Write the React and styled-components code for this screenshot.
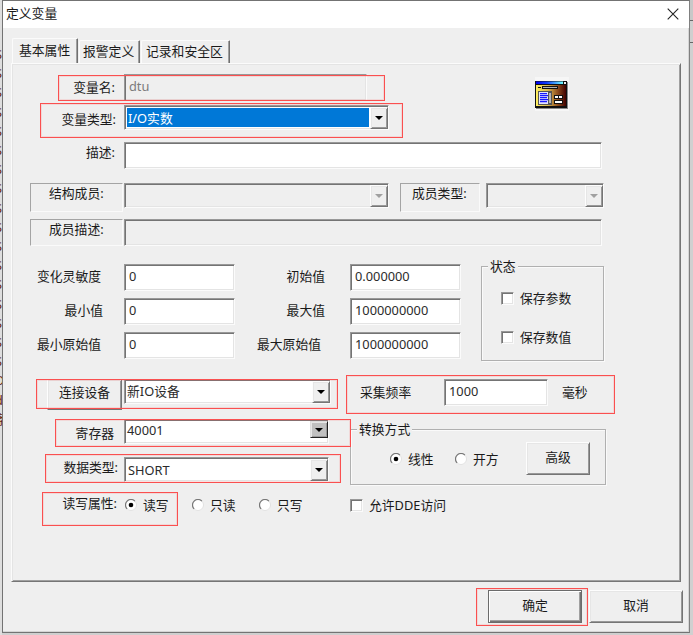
import { Fragment } from 'react';
import styled, { createGlobalStyle, css } from 'styled-components';

const GlobalStyle = createGlobalStyle`
  * { box-sizing: border-box; }
  body {
    margin: 0;
    background: #cfcfcf;
    color: #1a1a1a;
    font: 12.8px/16px 'Noto Sans', 'Noto Sans CJK SC', sans-serif;
    white-space: nowrap;
  }
`;

const sunken = css`
  border: 1px solid;
  border-color: #989898 #fbfbfb #fbfbfb #989898;
  box-shadow: inset 1px 1px 0 #747474, inset -1px -1px 0 #e4e4e4;
`;

const raised = css`
  border: 1px solid;
  border-color: #fdfdfd #757575 #757575 #fdfdfd;
  box-shadow: inset 1px 1px 0 #e6e6e6, inset -1px -1px 0 #999;
`;

const Desktop = styled.div`
  position: relative;
  display: flex;
  width: 693px;
  height: 635px;
  overflow: hidden;
`;

const Behind = styled.div`
  width: 2px;
  height: 635px;
  padding-top: 45px;
  flex: none;
  overflow: hidden;
  background: #dedede;
  color: #6a2a14;
  line-height: 19.2px;
  span {
    display: block;
    width: 8px;
    margin-left: -5px;
  }
`;

const BehindRight = styled.div`
  flex: 1;
  border-top: 20px solid #c8c8c8;
  background: linear-gradient(#666 1px, #cfcfcf 1px, #cfcfcf 22px, #666 22px, #666 23px, #d0d0d0 23px);
`;

const Dialog = styled.div`
  display: flex;
  flex-direction: column;
  width: 688px;
  height: 633px;
  flex: none;
  border: 1px solid #737373;
  border-right-color: #808080;
  background: #efefef;
  box-shadow: inset -1px -1px 0 #d5d5d5;
`;

const TitleBar = styled.div`
  display: flex;
  justify-content: space-between;
  height: 27px;
  flex: none;
  padding: 4px 10px 0 3px;
  background: #fff;
  svg { margin-top: 3px; }
`;

const Tabs = styled.div`
  display: flex;
  align-items: flex-end;
  height: 35px;
  flex: none;
  padding-left: 9px;
`;

const Tab = styled.div`
  width: ${p => p.$w}px;
  height: ${p => (p.$active ? 26 : 23)}px;
  margin-bottom: ${p => (p.$active ? -1 : 0)}px;
  padding: ${p => (p.$active ? '3px 0 0 6px' : '2px 0 0 3px')};
  border: solid;
  border-width: 1px 1px 0;
  border-color: #fbfbfb #707070 #fbfbfb #fbfbfb;
  border-radius: 2px 1px 0 0;
  background: #efefef;
  box-shadow: inset -1px 0 0 #a0a0a0;
  & + & { margin-left: 1px; }
  &:last-child { padding-left: 4px; }
`;

const Page = styled.div`
  width: 670px;
  height: 519px;
  flex: none;
  margin-left: 8px;
  padding-top: 10px;
  border: 1px solid;
  border-color: #fbfbfb #757575 #757575 #fbfbfb;
  box-shadow: inset 1px 1px 0 #e4e4e4, inset -1px -1px 0 #a0a0a0;
`;

const Row = styled.div`
  display: flex;
  align-items: flex-start;
  height: ${p => p.$h}px;
`;

const Label = styled.div`
  width: ${p => p.$w || 112}px;
  flex: none;
  padding: ${p => p.$top ?? 4}px ${p => p.$end || 0}px 0 0;
  text-align: right;
`;

const Field = styled.div`
  ${sunken}
  width: ${p => p.$w}px;
  height: 27px;
  flex: none;
  padding: 3px 0 0 4px;
  background: ${p => (p.$off ? '#efefef' : '#fff')};
  color: ${p => (p.$off ? '#7c7c7c' : '#2b2b2b')};
`;

const FrameLabel = styled.div`
  width: ${p => p.$w}px;
  height: ${p => p.$h}px;
  flex: none;
  margin: 0 ${p => p.$after}px 0 ${p => p.$before}px;
  padding: 1px 0 0 ${p => p.$pad}px;
  border: 1px solid;
  border-color: #a4a4a4 #fafafa #fafafa #a4a4a4;
`;

const ComboBox = styled.div`
  ${sunken}
  display: flex;
  width: ${p => p.$w}px;
  height: 25px;
  flex: none;
  padding: 1px 0 1px 1px;
  background: ${p => (p.$off ? '#efefef' : '#fff')};
`;

const ComboText = styled.div`
  flex: 1;
  margin: 1px;
  padding: ${p => p.$top ?? 2}px 0 0 1px;
  background: ${p => (p.$selected ? '#0078d7' : 'transparent')};
  color: ${p => (p.$selected ? '#fff' : '#2b2b2b')};
  text-indent: ${p => p.$shift || 0}px;
`;

const ComboButton = styled.div`
  ${raised}
  display: flex;
  align-items: center;
  justify-content: center;
  width: 18px;
  height: ${p => (p.$dark ? 17 : 22)}px;
  background: ${p => (p.$dark ? '#c0c0c0' : '#efefef')};
  ${p => p.$dark && 'border-color: #ddd #222 #222 #ddd;'}
`;

const Group = styled.div`
  position: relative;
  width: ${p => p.$w}px;
  height: ${p => p.$h}px;
  margin-top: ${p => p.$top || 0}px;
  border: 1px solid #b0b0b0;
  box-shadow: inset 1px 1px 0 #fafafa, 1px 1px 0 #fafafa;
`;

const Legend = styled.div`
  position: absolute;
  top: -9px;
  left: 6px;
  padding: 0 2px;
  background: #efefef;
`;

const Option = styled.div`
  display: flex;
  align-items: center;
  height: 16px;
  width: ${p => (p.$w ? `${p.$w}px` : 'auto')};
  gap: 6px;
`;

const ConvertOption = styled(Option)`
  margin-top: 9px;
`;

const CheckBox = styled.span`
  ${sunken}
  width: 13px;
  height: 13px;
  background: #fff;
`;

const Button = styled.div`
  ${raised}
  width: ${p => p.$w}px;
  height: ${p => p.$h}px;
  flex: none;
  padding-top: ${p => p.$top}px;
  text-align: center;
  ${p => p.$primary && css`
    border-color: #6b6b6b;
    box-shadow: inset 1px 1px 0 #fff, inset -1px -1px 0 #747474, inset -2px -2px 0 #a0a0a0;
  `}
`;

const Section = styled.div`
  display: flex;
  align-items: flex-start;
  height: ${p => p.$h}px;
`;

const Numbers = styled.div`
  display: grid;
  grid-template-columns: 112px 111px 115px 111px;
  row-gap: 7px;
  width: 469px;
`;

const StateOptions = styled.div`
  display: flex;
  flex-direction: column;
  gap: 23px;
  padding: 23px 0 0 19px;
`;

const Devices = styled.div`
  width: 338px;
`;

const DeviceButton = styled.div`
  width: 112px;
  padding-left: 35px;
`;

const RateLabel = styled.div`
  width: 94px;
  padding: 5px 0 0 10px;
`;

const UnitLabel = styled.div`
  padding: 5px 0 0 14px;
`;

const Convert = styled.div`
  display: flex;
  padding: 12px 0 0 39px;
`;

const AccessOptions = styled.div`
  display: flex;
  padding: 2px 0 0 1px;
`;

const Footer = styled.div`
  display: flex;
  justify-content: flex-end;
  gap: 7px;
  padding: 8px 6px 0 0;
`;

const IconCell = styled.div`
  margin: 3px 0 0 168px;
`;

// red annotation frame laid over the form
const Mark = styled.div`
  position: absolute;
  left: ${p => p.$x}px;
  top: ${p => p.$y}px;
  width: ${p => p.$w}px;
  height: ${p => p.$h}px;
  border: 1px solid #fa5050;
  box-shadow: inset 0 0 0 1px rgba(255, 90, 90, 0.15);
`;

const marks = [
  [58, 75, 327, 26],
  [40, 103, 363, 35],
  [36, 379, 302, 30],
  [346, 375, 269, 39],
  [55, 419, 296, 28],
  [45, 454, 296, 29],
  [42, 492, 136, 34],
  [476, 588, 112, 38],
];

const numbers = [
  ['变化灵敏度', 23, '0', '初始值', 25, '0.000000'],
  ['最小值', 21, '0', '最大值', 25, '1000000000'],
  ['最小原始值', 23, '0', '最大原始值', 29, '1000000000'],
];

const Arrow = ({ color = '#000' }) => (
  <svg width="8" height="4" viewBox="0 0 8 4">
    <path d="M0 0h8L4 4z" fill={color} />
  </svg>
);

const Combo = ({ w, off, dark, selected, top, shift, children }) => (
  <ComboBox $w={w} $off={off}>
    <ComboText $selected={selected} $top={top} $shift={shift}>{children}</ComboText>
    <ComboButton $dark={dark}><Arrow color={off ? '#a0a0a0' : '#000'} /></ComboButton>
  </ComboBox>
);

const Radio = ({ on }) => (
  <svg width="12" height="12" viewBox="0 0 12 12">
    <circle cx="6" cy="6" r="5.5" fill="#fff" stroke="#e2e2e2" />
    <path d="M2.1 9.9A5.5 5.5 0 0 1 9.9 2.1" fill="none" stroke="#777" strokeWidth="1.2" />
    {on && <circle cx="6" cy="6" r="2.3" fill="#000" />}
  </svg>
);

const FormIcon = () => (
  <svg width="34" height="34" viewBox="0 0 34 34">
    <defs>
      <linearGradient id="bar">
        <stop offset="0" stopColor="#0000f0" />
        <stop offset="0.4" stopColor="#1040ff" />
        <stop offset="1" stopColor="#70ffff" />
      </linearGradient>
      <linearGradient id="gold">
        <stop offset="0" stopColor="#fff060" />
        <stop offset="0.4" stopColor="#d8b850" />
        <stop offset="0.7" stopColor="#945420" />
        <stop offset="1" stopColor="#400000" />
      </linearGradient>
    </defs>
    <path d="M0 0h34v34H0z" fill="#f6f6f6" />
    <path d="M1 5h32v27H1z" fill="#8a8a8a" />
    <path d="M0 4h32v27H0z" fill="#111" />
    <path d="M1 4.5h27v2.5H1z" fill="url(#bar)" />
    <path d="M29 5h2v2h-2z" fill="#eee" />
    <path d="M1 8h30v21H1z" fill="url(#gold)" />
    <path d="M3 10h3v1H3zM7 9h16v3H7z" fill="#111" />
    <path d="M8 10h14v1H8z" fill="#b4b4b4" />
    <path d="M3 14h14v14H3z" fill="#555" />
    <path d="M4 15h9v12H4z" fill="#e4e4ff" />
    <path d="M14 16h2v10h-2z" fill="#b4b4b4" />
    <path d="M5 16h7v1.3H5zM5 18h8v1.3H5zM5 20h7v1.3H5zM5 22h8v1.3H5zM5 24h7v1.3H5z" fill="#1818ff" />
    <path d="M19 18h9v4h-9zM19 23h9v4h-9z" fill="#111" />
    <path d="M20 19h3v2h-3zM24 19h3v2h-3zM20 24h7v2h-7z" fill="#fff" />
  </svg>
);

export default () => (
  <Desktop>
    <GlobalStyle />
    <Behind>
      {'SSSSSSSSSSSSSSSSSDd条'.split('').map((c, i) => <span key={i}>{c}</span>)}
    </Behind>
    <Dialog>
      <TitleBar>
        <span>定义变量</span>
        <svg width="12" height="12" viewBox="0 0 12 12">
          <path d="M.7.7l10.6 10.6M11.3.7L.7 11.3" stroke="#222" strokeWidth="1.1" />
        </svg>
      </TitleBar>
      <Tabs>
        <Tab $w={66} $active>基本属性</Tab>
        <Tab $w={61}>报警定义</Tab>
        <Tab $w={89}>记录和安全区</Tab>
      </Tabs>
      <Page>
        <Row $h={31}>
          <Label $end={9} $top={5}>变量名:</Label>
          <Field $w={243} $off>dtu</Field>
          <IconCell><FormIcon /></IconCell>
        </Row>
        <Row $h={37}>
          <Label $end={8} $top={6}>变量类型:</Label>
          <Combo w={265} selected>I/O实数</Combo>
        </Row>
        <Row $h={41}>
          <Label $end={9} $top={2}>描述:</Label>
          <Field $w={478} />
        </Row>
        <Row $h={36}>
          <FrameLabel $w={93} $h={29} $before={18} $after={1} $pad={18}>结构成员:</FrameLabel>
          <Combo w={265} off />
          <FrameLabel $w={80} $h={29} $before={11} $after={6} $pad={11}>成员类型:</FrameLabel>
          <Combo w={118} off />
        </Row>
        <Row $h={45}>
          <FrameLabel $w={93} $h={27} $before={18} $after={1} $pad={18}>成员描述:</FrameLabel>
          <Field $w={478} $off />
        </Row>
        <Section $h={115}>
          <Numbers>
            {numbers.map(([a, aEnd, av, b, bEnd, bv]) => (
              <Fragment key={a}>
                <Label $end={aEnd}>{a}</Label>
                <Field $w={111}>{av}</Field>
                <Label $end={bEnd} $w={115}>{b}</Label>
                <Field $w={111}>{bv}</Field>
              </Fragment>
            ))}
          </Numbers>
          <Group $w={123} $h={95} $top={2}>
            <Legend>状态</Legend>
            <StateOptions>
              <Option><CheckBox />保存参数</Option>
              <Option><CheckBox />保存数值</Option>
            </StateOptions>
          </Group>
        </Section>
        <Section $h={116}>
          <Devices>
            <Row $h={40}>
              <DeviceButton><Button $w={75} $h={31} $top={4}>连接设备</Button></DeviceButton>
              <Combo w={207} top={1} shift={-1}>新IO设备</Combo>
            </Row>
            <Row $h={38}>
              <Label $end={10} $top={6}>寄存器</Label>
              <Combo w={205} dark top={-1}>40001</Combo>
            </Row>
            <Row $h={38}>
              <Label $end={6} $top={2}>数据类型:</Label>
              <Combo w={205} top={2}>SHORT</Combo>
            </Row>
          </Devices>
          <div>
            <Row $h={50}>
              <RateLabel>采集频率</RateLabel>
              <Field $w={104}>1000</Field>
              <UnitLabel>毫秒</UnitLabel>
            </Row>
            <Group $w={256} $h={56}>
              <Legend>转换方式</Legend>
              <Convert>
                <ConvertOption $w={65}><Radio on />线性</ConvertOption>
                <ConvertOption $w={71}><Radio />开方</ConvertOption>
                <Button $w={64} $h={33} $top={6}>高级</Button>
              </Convert>
            </Group>
          </div>
        </Section>
        <Row $h={20}>
          <Label $end={7} $top={0}>读写属性:</Label>
          <AccessOptions>
            <Option $w={67}><Radio on />读写</Option>
            <Option $w={67}><Radio />只读</Option>
            <Option $w={91}><Radio />只写</Option>
            <Option><CheckBox />允许DDE访问</Option>
          </AccessOptions>
        </Row>
      </Page>
      <Footer>
        <Button $w={94} $h={33} $top={6} $primary>确定</Button>
        <Button $w={94} $h={33} $top={6}>取消</Button>
      </Footer>
    </Dialog>
    <BehindRight />
    {marks.map(([x, y, w, h]) => <Mark key={y} $x={x} $y={y} $w={w} $h={h} />)}
  </Desktop>
);
